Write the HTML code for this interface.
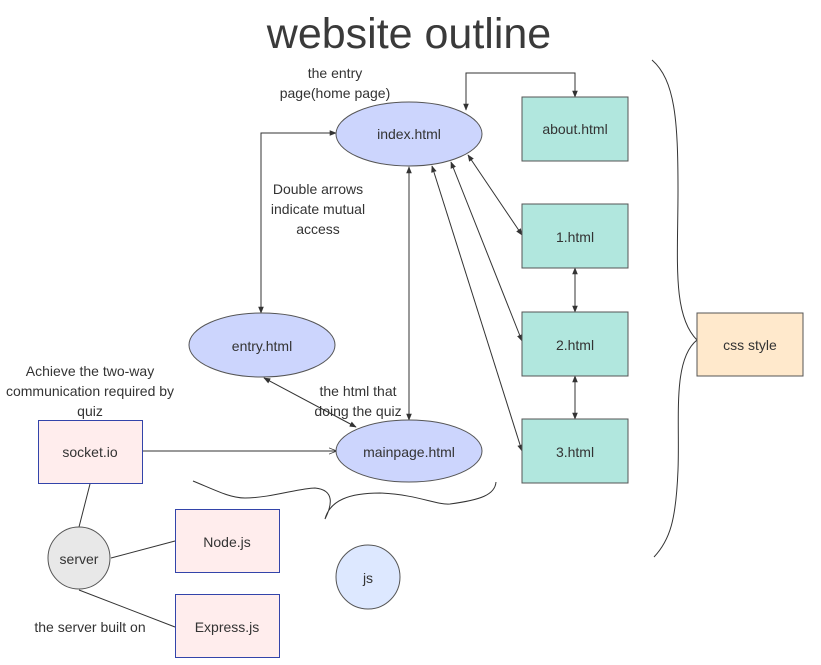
<html><head><style>body{margin:0;background:#fff}svg text{font-family:"Liberation Sans","DejaVu Sans",sans-serif;fill:#333}</style></head><body>
<svg width="821" height="665" xmlns="http://www.w3.org/2000/svg">
<defs>
<marker id="a" viewBox="0 0 10 10" refX="9" refY="5" markerWidth="7" markerHeight="7" orient="auto-start-reverse"><path d="M0,1 L10,5 L0,9 z" fill="#333"/></marker>
<marker id="o" viewBox="0 0 10 10" refX="9" refY="5" markerWidth="8" markerHeight="8" orient="auto"><path d="M0,1 L10,5 L0,9" fill="none" stroke="#333"/></marker>
</defs>
<text x="409" y="48" font-size="43" text-anchor="middle" style="fill:#3a3a3a">website outline</text>
<g stroke="#333" stroke-width="1" fill="none">
<path d="M466,110 V73 H575 V97" marker-start="url(#a)" marker-end="url(#a)"/>
<path d="M261,313 V133 H336" marker-start="url(#a)" marker-end="url(#a)"/>
<path d="M409,167 V420" marker-start="url(#a)" marker-end="url(#a)"/>
<path d="M468,155 L522,235" marker-start="url(#a)" marker-end="url(#a)"/>
<path d="M451,162 L522,341" marker-start="url(#a)" marker-end="url(#a)"/>
<path d="M432,166 L522,451" marker-start="url(#a)" marker-end="url(#a)"/>
<path d="M575,268 V312" marker-start="url(#a)" marker-end="url(#a)"/>
<path d="M575,376 V419" marker-start="url(#a)" marker-end="url(#a)"/>
<path d="M264,378 L356,427" marker-start="url(#a)" marker-end="url(#a)"/>
<path d="M142,451 H336" marker-end="url(#o)"/>
<path d="M90,484 L79,527 M111,558 L175,541 M79,590 L175,627"/>
<path d="M193,481 C215,490 230,498 245,498 C270,498 300,488 315,488 C335,490 332,505 325,519 C330,500 350,493 380,493 C420,495 435,505 450,504 C480,500 495,495 496,482"/>
<path d="M652,60 C675,80 678,120 678,190 C678,260 672,315 697,340 C672,360 680,420 678,470 C676,520 670,540 654,557"/>
</g>
<g stroke="#555" stroke-width="1">
<ellipse cx="409" cy="134" rx="73" ry="32" fill="#ccd5fd"/>
<ellipse cx="262" cy="345" rx="73" ry="32" fill="#ccd5fd"/>
<ellipse cx="409" cy="451" rx="73" ry="31" fill="#ccd5fd"/>
<rect x="522" y="97" width="106" height="64" fill="#b1e7de"/>
<rect x="522" y="204" width="106" height="64" fill="#b1e7de"/>
<rect x="522" y="312" width="106" height="64" fill="#b1e7de"/>
<rect x="522" y="419" width="106" height="64" fill="#b1e7de"/>
<rect x="697" y="313" width="106" height="63" fill="#ffe9cc"/>
<circle cx="79" cy="558" r="31" fill="#e8e8e8"/>
<circle cx="368" cy="577" r="32" fill="#dde8ff"/>
</g>
<g stroke="#3344aa" fill="#ffeded">
<rect x="38.5" y="420.5" width="104" height="63"/>
<rect x="175.5" y="509.5" width="104" height="63"/>
<rect x="175.5" y="594.5" width="104" height="63"/>
</g>
<g font-size="14" text-anchor="middle">
<text x="409" y="139">index.html</text>
<text x="262" y="351">entry.html</text>
<text x="409" y="457">mainpage.html</text>
<text x="575" y="134">about.html</text>
<text x="575" y="242">1.html</text>
<text x="575" y="350">2.html</text>
<text x="575" y="457">3.html</text>
<text x="750" y="350">css style</text>
<text x="90" y="457">socket.io</text>
<text x="227" y="547">Node.js</text>
<text x="227" y="632">Express.js</text>
<text x="79" y="564">server</text>
<text x="368" y="583">js</text>
<text x="335" y="78">the entry</text>
<text x="335" y="98">page(home page)</text>
<text x="318" y="194">Double arrows</text>
<text x="318" y="214">indicate mutual</text>
<text x="318" y="234">access</text>
<text x="358" y="396">the html that</text>
<text x="358" y="416">doing the quiz</text>
<text x="90" y="376">Achieve the two-way</text>
<text x="90" y="396">communication required by</text>
<text x="90" y="416">quiz</text>
<text x="90" y="632">the server built on</text>
</g>
</svg>
</body></html>
